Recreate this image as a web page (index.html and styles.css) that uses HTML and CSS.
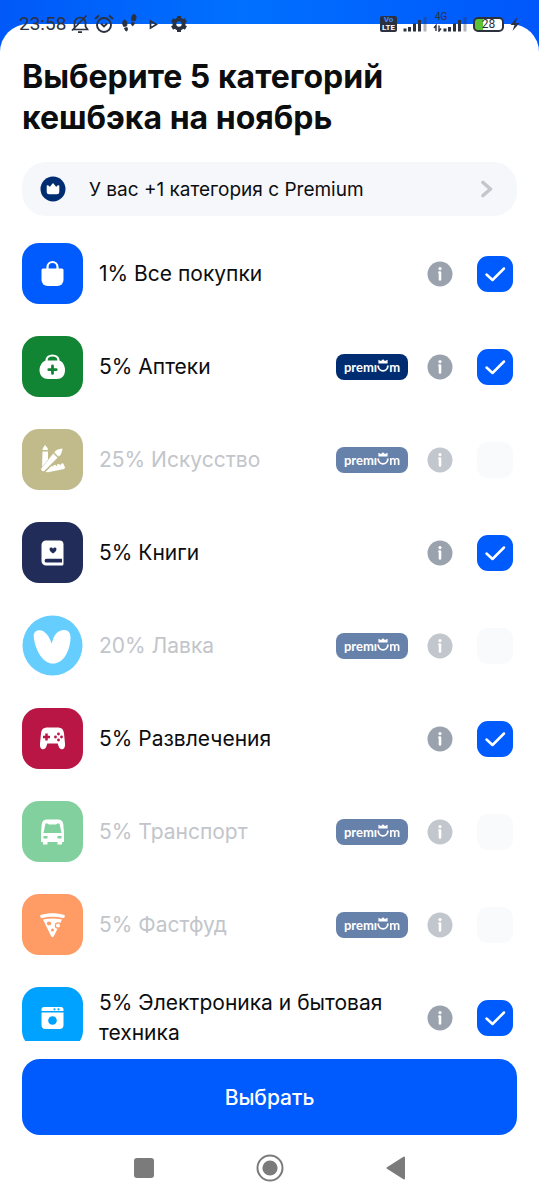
FILE: index.html
```html
<!DOCTYPE html>
<html lang="ru">
<head>
<meta charset="utf-8">
<meta name="viewport" content="width=device-width, initial-scale=1">
<title>Категории кешбэка</title>
<link rel="stylesheet" href="styles.css">
</head>
<body>
<svg class="defs" aria-hidden="true">
  <symbol id="info" viewBox="0 0 26 26"><circle cx="13" cy="13" r="12.5" fill="#99a2ad"/><circle cx="13" cy="7.6" r="1.6" fill="#fff"/><path d="M12.400 11.5h.6v7" fill="none" stroke="#fff" stroke-width="2.6" stroke-linecap="round" stroke-linejoin="round"/></symbol>
  <symbol id="check" viewBox="0 0 36 36"><path d="M9.5 18.5l6 5.5L27 12.5" fill="none" stroke="#fff" stroke-width="2.5" stroke-linecap="round" stroke-linejoin="round"/></symbol>
  <symbol id="crown-u" viewBox="0 0 12 14"><path d="M1.2 6.5v.7a4.8 4.6 0 0 0 9.6 0v-.7" fill="none" stroke="#fff" stroke-width="1.8"/><path d="M1.4 .8l2.600 1.300L6 .2l2 1.900L10.600 .8v3.600H1.400z" fill="#fff"/></symbol>
</svg>

<div class="status">
  <div class="status-group">
    <span class="time">23:58</span>
    <svg width="18" height="20" viewBox="0 0 18 20"><path d="M3.5 15.5V9a5.5 5.5 0 0 1 11 0v3.5l2 3H2M7 18.2h4M1 16.5L15.5 1.5" fill="none" stroke="currentColor" stroke-width="1.7"/></svg>
    <svg width="20" height="20" viewBox="0 0 20 20"><circle cx="10" cy="11" r="7" fill="none" stroke="currentColor" stroke-width="1.9"/><path d="M1 5l4-3.5M19 5l-4-3.5M7 9.5l3 3 3-3" fill="none" stroke="currentColor" stroke-width="1.9"/></svg>
    <svg class="steps" width="15" height="20" viewBox="0 0 15 20"><path d="M2.500 6C4.500 6 5.500 9 4.700 12L1.600 12.500C.2 10 .3 6.500 2.500 6zM2.500 14l2.700-.4c1.200 4-1.800 5-2.700.4zM12.200 .5c2.500.5 2.300 4 .7 6.500l-3.200-.6C9 3.500 10.200 .2 12.200 .5zM9.500 8.200l2.900.6c-.6 4.300-3.700 3.600-2.900-.6z" fill="currentColor" stroke="currentColor" stroke-width=".8"/></svg>
    <svg class="play" width="9" height="11" viewBox="0 0 9 11"><path d="M1.500 2l6 3.500-6 3.500z" fill="none" stroke="currentColor" stroke-width="1.7"/></svg>
    <svg width="18" height="18" viewBox="0 0 18 18"><circle cx="9" cy="9" r="4.600" fill="none" stroke="currentColor" stroke-width="3.800"/><path d="M9 1v3M9 14v3M2.070 5l2.600 1.500M13.330 11.500l2.600 1.500M2.070 13l2.600-1.500M13.330 6.500l2.600-1.500" stroke="currentColor" stroke-width="4"/></svg>
  </div>
  <div class="status-group right">
    <span class="volte"><span>Vo</span><span>LTE</span></span>
    <svg width="24" height="16" viewBox="0 0 24 16"><path d="M2 12.500v3M6.500 11v4.500M11.500 7.500v8M16.500 4v11.500" stroke="currentColor" stroke-width="3"/><path d="M22 1v14.500" stroke="currentColor" stroke-width="3" opacity=".35"/></svg>
    <span class="mobile"><span class="gen">4G</span>
    <svg width="34" height="16" viewBox="0 0 34 16"><path d="M3 15V9.500L1 12M6 9.500V15l2-2.500" fill="none" stroke="currentColor" stroke-width="1.400"/><path d="M12 12.500v3M16.500 11v4.500M21.500 7.500v8M26.500 4v11.500" stroke="currentColor" stroke-width="3"/><path d="M32 1v14.500" stroke="currentColor" stroke-width="3" opacity=".35"/></svg></span>
    <span class="battery">28</span>
    <svg width="10" height="14" viewBox="0 0 10 14"><path d="M7.500 0L.5 8h4L2.500 14 9.500 6H5.500z" fill="currentColor"/></svg>
  </div>
</div>

<main class="sheet">
  <h1 class="title">Выберите 5 категорий<br>кешбэка на ноябрь</h1>
  <button class="banner" type="button">
    <svg width="26" height="26" viewBox="0 0 26 26"><circle cx="13" cy="13" r="12.500" fill="#002d72"/><path d="M6.700 9.500c1.500-.5 2.500.5 3 1.500L13 7l3.300 4c.5-1 1.500-2 3-1.500v6.300a2.500 2.500 0 0 1-2.500 2.500H9.200a2.500 2.500 0 0 1-2.500-2.500z" fill="#fff"/></svg>
    <span class="banner-text">У вас +1 категория с Premium</span>
    <svg width="14" height="18" viewBox="0 0 14 18"><path d="M3 2.500L10.500 9 3 15.500" fill="none" stroke="#c3c6cb" stroke-width="3.600" stroke-linecap="round" stroke-linejoin="round"/></svg>
  </button>

  <ul class="list">
    <li class="row">
      <svg class="icon" viewBox="0 0 61 61"><rect width="61" height="61" rx="17" fill="#005bff"/><path d="M25.500 26v-2a5 5 0 0 1 10 0v2" fill="none" stroke="#fff" stroke-width="2.200"/><path d="M21 25.500h19a1.500 1.500 0 0 1 1.500 1.500v10a6 6 0 0 1-6 6h-10a6 6 0 0 1-6-6V27a1.500 1.500 0 0 1 1.500-1.500z" fill="#fff"/></svg>
      <label class="name" for="c1">1% Все покупки</label>
      <button class="info" type="button" aria-label="Подробнее"><svg><use href="#info"/></svg></button>
      <span class="tick"><input id="c1" type="checkbox" checked><svg><use href="#check"/></svg></span>
    </li>
    <li class="row">
      <svg class="icon" viewBox="0 0 61 61"><rect width="61" height="61" rx="17" fill="#118533"/><path d="M24.500 26v-1.500c0-3 2.500-5 6-5s6 2 6 5V26" fill="none" stroke="#fff" stroke-width="2.200"/><path d="M24.500 24.500h12c3.500 0 6.500 5 6.500 9.500 0 6-3.500 9-8 9h-9c-4.500 0-8.500-3-8.500-9 0-4.500 3.500-9.500 7-9.500z" fill="#fff"/><path d="M30.500 30v7.400M26.800 33.700h7.400" stroke="#118533" stroke-width="2.800" stroke-linecap="round"/></svg>
      <label class="name" for="c2">5% Аптеки</label>
      <span class="premium">premı<svg><use href="#crown-u"/></svg>m</span>
      <button class="info" type="button" aria-label="Подробнее"><svg><use href="#info"/></svg></button>
      <span class="tick"><input id="c2" type="checkbox" checked><svg><use href="#check"/></svg></span>
    </li>
    <li class="row off">
      <svg class="icon" viewBox="0 0 61 61"><rect width="61" height="61" rx="17" fill="#988f41"/><g fill="#fff"><path d="M20.500 22.500H26v8l-6 7.500z"/><path d="M20.500 21c0-2 1.500-3 2.500-5.200 1 2 3.100 3.200 3 5.200z"/><path d="M31.300 24.500l4.200 4.200-13 13c-2 1.500-4-.5-3-2.500z"/><path d="M32.300 23.500c1-2.500 4-3.500 8.200-4-.5 4-1.500 7-4.200 8z"/><path d="M23.500 43l6-6 1.500.5.500-1.300 2-.4 1.200 1.500.6-2 2-.3 1 1.500.8-1.800 2-.4 2 4.200-1 1.500-16 3.200z"/></g></svg>
      <label class="name" for="c3">25% Искусство</label>
      <span class="premium">premı<svg><use href="#crown-u"/></svg>m</span>
      <button class="info" type="button" aria-label="Подробнее"><svg><use href="#info"/></svg></button>
      <span class="tick"><input id="c3" type="checkbox" aria-label="25% Искусство" disabled></span>
    </li>
    <li class="row">
      <svg class="icon" viewBox="0 0 61 61"><rect width="61" height="61" rx="17" fill="#212c59"/><path d="M24 18.500h13.500a4 4 0 0 1 4 4V42a1.500 1.500 0 0 1-1.500 1.500H24a4.500 4.500 0 0 1-4.500-4.500V23a4.500 4.500 0 0 1 4.500-4.500z" fill="#fff"/><path d="M24.500 36.800H40v3.800H24.500a1.900 1.900 0 0 1 0-3.800zM31 31.500c-2-1.300-3.500-2.800-3.500-4.300 0-2 2.700-2.200 3.500-.5.8-1.700 3.500-1.500 3.500.5 0 1.500-1.500 3-3.500 4.300z" fill="#212c59"/></svg>
      <label class="name" for="c4">5% Книги</label>
      <button class="info" type="button" aria-label="Подробнее"><svg><use href="#info"/></svg></button>
      <span class="tick"><input id="c4" type="checkbox" checked><svg><use href="#check"/></svg></span>
    </li>
    <li class="row off vivid">
      <svg class="icon" viewBox="0 0 61 61"><circle cx="30.500" cy="30.500" r="30" fill="#66ceff"/><path d="M11.800 22c-.5-4.500 2-6.800 5.700-6.800 5.500 0 10 6.300 12.300 13.600C31.300 20 36 15 42 15c4.500 0 6.700 3 6.500 8C48 36 41.500 48.600 31 48.600 19.500 48.600 12.500 32 11.800 22z" fill="#fff"/></svg>
      <label class="name" for="c5">20% Лавка</label>
      <span class="premium">premı<svg><use href="#crown-u"/></svg>m</span>
      <button class="info" type="button" aria-label="Подробнее"><svg><use href="#info"/></svg></button>
      <span class="tick"><input id="c5" type="checkbox" disabled></span>
    </li>
    <li class="row">
      <svg class="icon" viewBox="0 0 61 61"><rect width="61" height="61" rx="17" fill="#b91646"/><path d="M26 19.500h9c5 0 6.500 2 7 6l1 10c.6 7-5 7.500-6.500 2.500l-.8-2.500H25.300l-.8 2.500c-1.500 5-7.100 4.500-6.500-2.500l1-10c.5-4 2-6 7-6z" fill="#fff"/><path d="M24.500 25.500v7M21 29h7" stroke="#b91646" stroke-width="2.500"/><g fill="#b91646"><circle cx="36.500" cy="26" r="1.400"/><circle cx="36.500" cy="32" r="1.400"/><circle cx="33.500" cy="29" r="1.400"/><circle cx="39.500" cy="29" r="1.400"/></g></svg>
      <label class="name" for="c6">5% Развлечения</label>
      <button class="info" type="button" aria-label="Подробнее"><svg><use href="#info"/></svg></button>
      <span class="tick"><input id="c6" type="checkbox" checked><svg><use href="#check"/></svg></span>
    </li>
    <li class="row off">
      <svg class="icon" viewBox="0 0 61 61"><rect width="61" height="61" rx="17" fill="#32b160"/><path d="M25 18.500h11c3 0 5 1.500 5.300 5l.7 8v9.500h-2v2.500h-4.500V41h-10v2.500H21V41h-2v-9.500l.7-8c.3-3.500 2.300-5 5.300-5z" fill="#fff"/><path d="M23.500 22.500h2l1.500 1h7l1.500-1h2l2 9.500h-18zM21.500 35h4v2.500h-4zM35.500 35h4v2.500h-4z" fill="#32b160"/></svg>
      <label class="name" for="c7">5% Транспорт</label>
      <span class="premium">premı<svg><use href="#crown-u"/></svg>m</span>
      <button class="info" type="button" aria-label="Подробнее"><svg><use href="#info"/></svg></button>
      <span class="tick"><input id="c7" type="checkbox" disabled></span>
    </li>
    <li class="row off">
      <svg class="icon" viewBox="0 0 61 61"><rect width="61" height="61" rx="17" fill="#ff5a00"/><path d="M18.500 21c8-2.500 16-2.500 24 0 1 2-.5 3.500-2 3-7-1.700-13-1.700-20 0-1.500.5-3-1-2-3z" fill="#fff"/><path d="M21 25.500c6.500-1.500 12.500-1.500 19 0L32 42c-.7 1.500-2.300 1.500-3 0z" fill="#fff"/><g fill="#ff5a00"><circle cx="27" cy="29.500" r="2.100"/><circle cx="30.500" cy="36" r="1.500"/></g><circle cx="36" cy="31.500" r="2.600" fill="#fff" stroke="#ff5a00" stroke-width="1.200"/></svg>
      <label class="name" for="c8">5% Фастфуд</label>
      <span class="premium">premı<svg><use href="#crown-u"/></svg>m</span>
      <button class="info" type="button" aria-label="Подробнее"><svg><use href="#info"/></svg></button>
      <span class="tick"><input id="c8" type="checkbox" disabled></span>
    </li>
    <li class="row">
      <svg class="icon" viewBox="0 0 61 61"><rect width="61" height="61" rx="17" fill="#00a2ff"/><path d="M22 20h17a2.500 2.500 0 0 1 2.500 2.500V24h-22v-1.500A2.500 2.500 0 0 1 22 20zM19.500 25.500h22V38a4 4 0 0 1-4 4h-14a4 4 0 0 1-4-4z" fill="#fff"/><g fill="#00a2ff"><circle cx="30.500" cy="33.500" r="4.300"/><circle cx="32.500" cy="22.300" r="1.100"/><circle cx="36.500" cy="22.300" r="1.100"/></g></svg>
      <label class="name" for="c9">5% Электроника и бытовая техника</label>
      <button class="info" type="button" aria-label="Подробнее"><svg><use href="#info"/></svg></button>
      <span class="tick"><input id="c9" type="checkbox" checked><svg><use href="#check"/></svg></span>
    </li>
  </ul>

  <button class="submit" type="button">Выбрать</button>
  <nav class="system-nav">
    <button type="button" aria-label="Недавние"><svg width="28" height="28" viewBox="0 0 28 28"><rect x="4" y="4" width="20" height="20" rx="3" fill="#7b7b7b"/></svg></button>
    <button type="button" aria-label="Домой"><svg width="28" height="28" viewBox="0 0 28 28"><circle cx="14" cy="14" r="12.500" fill="none" stroke="#7b7b7b" stroke-width="2"/><circle cx="14" cy="14" r="7.600" fill="#7b7b7b"/></svg></button>
    <button type="button" aria-label="Назад"><svg width="28" height="28" viewBox="0 0 28 28"><path d="M5.500 14L22 3.500v21z" fill="#7b7b7b" stroke="#7b7b7b" stroke-width="2" stroke-linejoin="round"/></svg></button>
  </nav>
</main>
</body>
</html>
```
FILE: styles.css
```css
* { box-sizing: border-box; }

body {
  margin: 0;
  height: 100vh;
  display: flex;
  flex-direction: column;
  padding-top: 24px;
  position: relative;
  background: linear-gradient(90deg, #0059f8, #0070ff 45%, #0057fb);
  font-family: Inter, "Liberation Sans", sans-serif;
  color: #0c0d0f;
}

button {
  border: 0;
  padding: 0;
  background: none;
  font: inherit;
  color: inherit;
  cursor: pointer;
}

svg { display: block; flex: none; }

.defs { position: absolute; width: 0; height: 0; }

.status {
  position: absolute;
  top: 14px;
  left: 0;
  right: 0;
  height: 20px;
  padding: 0 19px;
  display: flex;
  justify-content: space-between;
  color: #2c3140;
  font-family: Roboto, sans-serif;
}

.status-group { display: flex; align-items: center; gap: 5px; }
.right { gap: 6px; }
.time { font-size: 19px; line-height: 20px; }
.steps { margin-left: 3px; }
.play { margin: 0 7px; }

.volte {
  display: flex;
  flex-direction: column;
  align-items: center;
  width: 17px;
  border-radius: 2px;
  background: #2c3140;
  color: #fff;
  font-size: 8px;
  line-height: 8px;
  font-weight: 700;
}
.volte span:first-child { color: #3f8cff; }

.mobile { position: relative; }
.gen {
  position: absolute;
  top: -4px;
  left: 2px;
  font-size: 10px;
  line-height: 10px;
}

.battery {
  width: 31px;
  height: 15px;
  border: 2px solid #2c3140;
  border-radius: 5px;
  background: linear-gradient(90deg, #5bc236 8px, #ffffff 8px);
  font-size: 12px;
  line-height: 11px;
  text-align: center;
}

.sheet {
  flex: 1;
  min-height: 0;
  display: flex;
  flex-direction: column;
  padding: 32px 22px 0;
  border-radius: 28px 28px 0 0;
  background: #fff;
}

.title {
  margin: 0;
  font-size: 32px;
  line-height: 41px;
  font-weight: 700;
}

.banner {
  flex: none;
  display: flex;
  align-items: center;
  height: 54px;
  margin-top: 24px;
  padding: 0 23px 0 18px;
  border-radius: 24px;
  background: #f5f7fb;
  text-align: left;
}

.banner-text {
  flex: 1;
  margin-left: 23px;
  font-size: 19px;
}

.list {
  flex: 1;
  min-height: 0;
  margin: 11px 0 0;
  padding: 0 4px 0 0;
  overflow: hidden;
  list-style: none;
}

.row {
  display: flex;
  align-items: center;
  height: 93px;
}

.icon { width: 61px; height: 61px; }

.name {
  flex: 1;
  margin: 0 16px;
  font-size: 21px;
  line-height: 30px;
}

.premium {
  display: flex;
  align-items: center;
  justify-content: center;
  width: 72px;
  height: 26px;
  margin-right: 19px;
  border-radius: 8px;
  background: #002d72;
  color: #fff;
  font: 700 13px/24px Lato, sans-serif;
}
.premium svg { width: 12px; height: 14px; margin-bottom: 2px; }

.info svg { width: 26px; height: 26px; }

.tick {
  display: grid;
  margin-left: 24px;
}
.tick input, .tick svg { grid-area: 1 / 1; width: 36px; height: 36px; }
.tick svg { pointer-events: none; }
.tick input {
  appearance: none;
  margin: 0;
  border-radius: 11px;
  background: #f9fafc;
}
.tick input:checked { background: #005bff; }

.off .icon, .off .premium, .off .info { opacity: 0.6; }
.vivid .icon { opacity: 1; }
.off .name { color: #c2c5ca; }

.submit {
  flex: none;
  height: 76px;
  margin-top: 18px;
  border-radius: 18px;
  background: #005bff;
  color: #fff;
  font-size: 21px;
  font-weight: 500;
}

.system-nav {
  flex: none;
  display: flex;
  align-items: center;
  justify-content: center;
  gap: 98px;
  height: 65px;
}
```
